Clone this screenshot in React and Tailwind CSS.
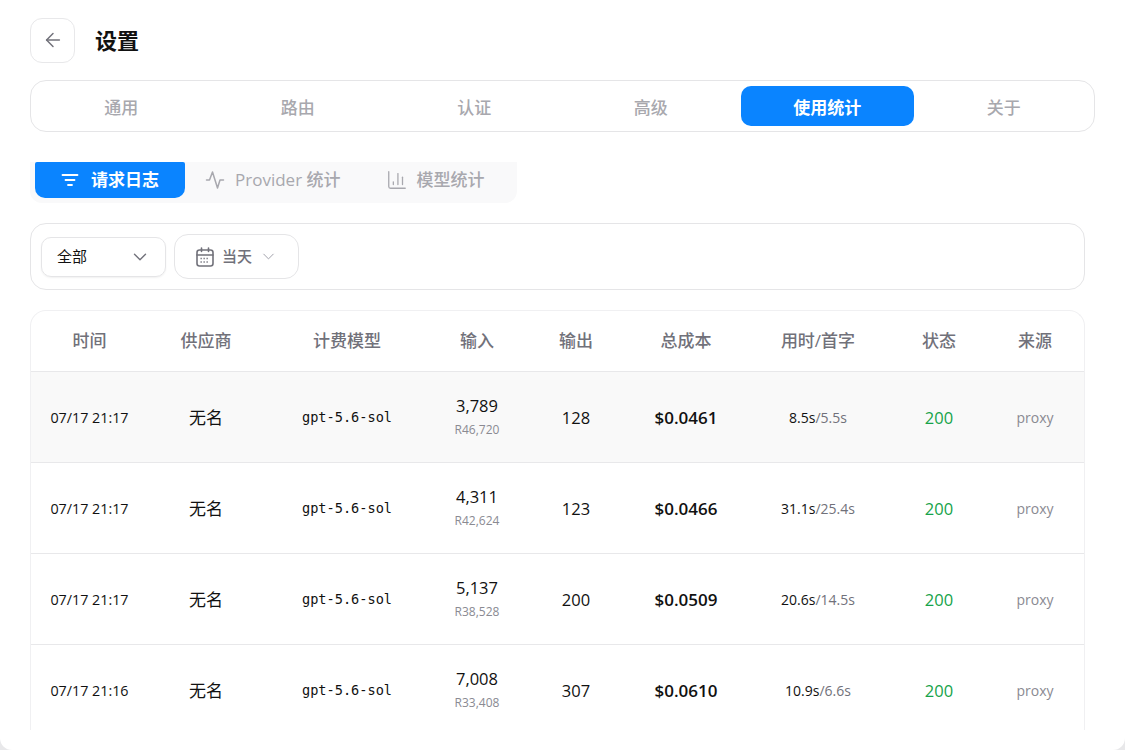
import React from "react";
import { ArrowLeft, ChevronDown, ChartColumn } from "lucide-react";

const cols = "grid grid-cols-[117px_116px_166px_94px_104px_116px_148px_94px_98px] items-center text-center";
const rows = [
  ["07/17 21:17", "3,789", "R46,720", "128", "$0.0461", "8.5s", "5.5s", true],
  ["07/17 21:17", "4,311", "R42,624", "123", "$0.0466", "31.1s", "25.4s"],
  ["07/17 21:17", "5,137", "R38,528", "200", "$0.0509", "20.6s", "14.5s"],
  ["07/17 21:16", "7,008", "R33,408", "307", "$0.0610", "10.9s", "6.6s"],
];
const tabs = ["通用", "路由", "认证", "高级", "使用统计", "关于"];
const heads = ["时间", "供应商", "计费模型", "输入", "输出", "总成本", "用时/首字", "状态", "来源"];

function FilterIcon() {
  return (
    <svg width="18" height="14" viewBox="0 0 18 14" fill="none" stroke="currentColor" strokeWidth="1.8" strokeLinecap="round">
      <path d="M1.500 2h15M4.500 7h9M7 12h4" />
    </svg>
  );
}
function ActivityIcon() {
  return (
    <svg width="20" height="20" viewBox="0 0 20 20" fill="none" stroke="currentColor" strokeWidth="1.5" strokeLinecap="round" strokeLinejoin="round">
      <path d="M1.500 10h3L7.500 2l5 16 2.500-8h3.500" />
    </svg>
  );
}
function CalendarIcon() {
  return (
    <svg width="18" height="20" viewBox="0 0 18 20" fill="none" stroke="currentColor" strokeWidth="1.6" strokeLinecap="round">
      <rect x="1" y="3" width="16" height="16" rx="2.500" />
      <path d="M1 8h16M5.500 1v3.500M12.500 1v3.500" />
      <path strokeWidth="1.300" strokeDasharray="1.300 1.700" strokeLinecap="butt" d="M4.500 11.500h9M4.500 15h9" />
    </svg>
  );
}

export default function App() {
  return (
    <div className="h-[750px] w-[1125px] overflow-hidden bg-[#e8e8ea] font-['Open_Sans','Noto_Sans_CJK_SC',sans-serif]">
      <div className="h-[750px] overflow-hidden rounded-b-[12px] bg-white pl-[30px]">
        <header className="flex h-[80px] items-center gap-[20px]">
          <button className="flex h-[45px] w-[45px] items-center justify-center rounded-[12px] border border-[#e8e8ea] text-[#71717a]">
            <ArrowLeft size={22} strokeWidth={1.6} />
          </button>
          <h1 className="text-[22px] leading-[30px] font-bold text-[#111]">设置</h1>
        </header>

        <nav className="grid h-[52px] w-[1065px] grid-cols-6 items-center gap-[4px] rounded-[16px] border border-[#e5e5e7] px-[4px]">
          {tabs.map((t) => (
            <div key={t} className={t === "使用统计"
              ? "flex h-[40px] items-center justify-center rounded-[10px] bg-[#0a84ff] pt-[3px] text-[17px] font-semibold text-white"
              : "flex h-[40px] items-center justify-center pt-[3px] text-[17px] font-medium text-[#a8a8ae]"}>{t}</div>
          ))}
        </nav>

        <div className="mt-[30px] flex h-[41px] w-[487px] items-start rounded-b-[12px] bg-[#f9f9fa] pl-[5px]">
          <div className="flex h-[36px] w-[150px] items-center justify-center gap-[12px] rounded-b-[10px] rounded-t-[2px] bg-[#0a84ff] text-[17px] font-semibold text-white">
            <FilterIcon />
            <span>请求日志</span>
          </div>
          <div className="ml-[20px] flex h-[36px] items-center gap-[10px] text-[17px] font-medium text-[#a8a8ae]">
            <ActivityIcon />
            <span>Provider 统计</span>
          </div>
          <div className="ml-[45px] flex h-[36px] items-center gap-[9px] text-[17px] font-medium text-[#a8a8ae]">
            <ChartColumn size={22} strokeWidth={1.4} />
            <span>模型统计</span>
          </div>
        </div>

        <section className="mt-[20px] flex h-[67px] w-[1055px] items-center gap-[8px] rounded-[16px] border border-[#e5e5e7] pl-[10px]">
          <div className="flex h-[40px] w-[125px] items-center justify-between rounded-[10px] border border-[#e5e5e7] pl-[15px] pr-[14px] text-[15px] text-[#111] shadow-[0_1px_2px_rgba(0,0,0,0.06)]">
            <span>全部</span>
            <ChevronDown size={22} strokeWidth={1.5} className="text-[#71717a]" />
          </div>
          <div className="flex h-[45px] w-[125px] items-center rounded-[14px] border border-[#e5e5e7] pl-[21px] text-[15px] text-[#71717a]">
            <CalendarIcon />
            <span className="ml-[8px] font-medium">当天</span>
            <ChevronDown size={19} strokeWidth={1.25} className="ml-[7px] text-[#a1a1aa]" />
          </div>
        </section>

        <div className="mt-[20px] h-[420px] w-[1055px] overflow-hidden rounded-t-[16px] border-x border-t border-[#f0f0f2]">
          <div className={`${cols} h-[61px] border-b border-[#e8e8ea] text-[17px] font-medium text-[#71717a]`}>
            {heads.map((h) => <div key={h}>{h}</div>)}
          </div>
          {rows.map((r, i) => (
            <div key={i} className={`${cols} h-[91px] border-b border-[#e8e8ea] pt-[1px] text-[#111] ${r[7] ? "bg-[#f9f9f9]" : ""}`}>
              <div className="text-[14.3px]">{r[0]}</div>
              <div className="text-[17px]">无名</div>
              <div className="font-['DejaVu_Sans_Mono',monospace] text-[13.6px]">gpt-5.6-sol</div>
              <div className="flex flex-col items-center">
                <span className="text-[16.5px] leading-[24px]">{r[1]}</span>
                <span className="text-[12px] leading-[24px] text-[#8a8a92]">{r[2]}</span>
              </div>
              <div className="pt-[1px] text-[16.5px]">{r[3]}</div>
              <div className="text-[17px] font-semibold">{r[4]}</div>
              <div className="text-[14px]">{r[5]}<span className="text-[#71717a]">/{r[6]}</span></div>
              <div className="pt-[1px] text-[16.5px] text-[#16a34a]">200</div>
              <div className="text-[14px] text-[#8a8a92]">proxy</div>
            </div>
          ))}
        </div>
      </div>
    </div>
  );
}
